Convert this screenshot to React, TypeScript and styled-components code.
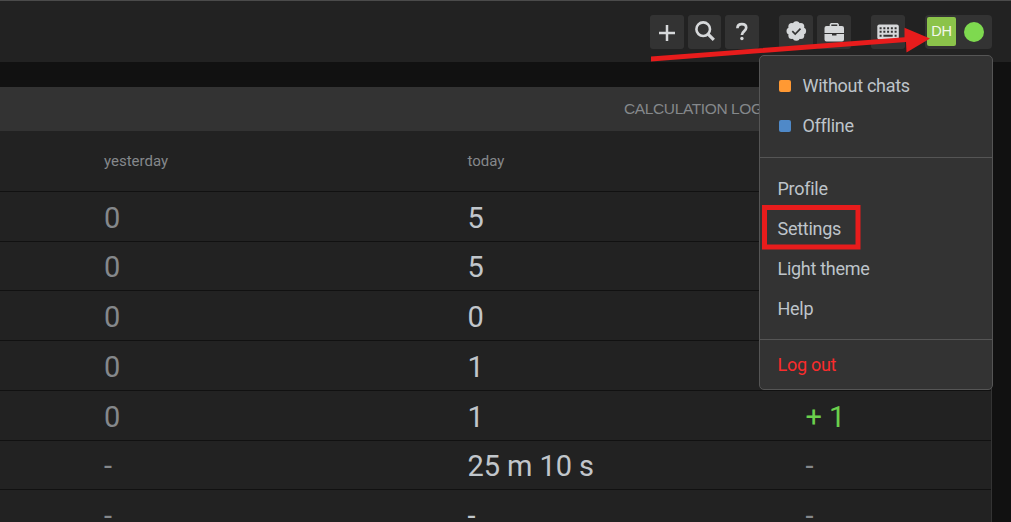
import React from "react";
import styled, { createGlobalStyle } from "styled-components";

const Global = createGlobalStyle`
  * { box-sizing: border-box; }
  html, body { margin: 0; height: 100%; overflow: hidden; }
  body { background: #111; font-family: Roboto, "Liberation Sans", sans-serif; color: #bec4ca; }
`;

const Page = styled.div`
  position: relative;
  height: 522px;
  overflow: hidden;
`;

const TopBar = styled.header`
  display: flex;
  justify-content: flex-end;
  align-items: flex-start;
  height: 62px;
  padding: 14px 19px 0 0;
  background: #222;
  border-top: 1px solid #4b4b4b;
`;

const ToolButton = styled.button<{ $gap?: number; $w?: number }>`
  width: ${(p) => p.$w ?? 34}px;
  height: 34px;
  margin: 0 ${(p) => p.$gap ?? 4}px 0 0;
  padding: 0;
  border: 0;
  border-radius: 3px;
  background: #333;
  color: #d6d8da;
  svg { display: block; }
`;

const UserButton = styled.button`
  display: flex;
  align-items: center;
  justify-content: space-between;
  width: 67px;
  height: 34px;
  padding: 0 8px 1px 2px;
  border: 0;
  border-radius: 4px;
  background: #333;
`;

const Avatar = styled.span`
  width: 29px;
  height: 29px;
  border-radius: 2px;
  background: #8bc34a;
  color: #f2f7ea;
  font: 14.5px/29px "Liberation Sans", Arial, sans-serif;
  letter-spacing: -0.3px;
  text-align: center;
`;

const StatusDot = styled.span`
  width: 20px;
  height: 20px;
  margin-top: 1px;
  border-radius: 50%;
  background: #7ed94f;
`;

const Panel = styled.main`
  width: 992px;
  margin-top: 25px;
  background: #222;
  border-right: 1px solid #333;
`;

const PanelHeader = styled.div`
  height: 44px;
  padding-left: 624px;
  background: #333;
  color: #85888b;
  font-family: "Liberation Sans", Arial, sans-serif;
  font-size: 15.5px;
  letter-spacing: -0.38px;
  line-height: 43px;
`;

const Row = styled.div<{ $head?: boolean }>`
  display: grid;
  grid-template-columns: 363.5px 338px 1fr;
  align-items: center;
  height: ${(p) => (p.$head ? "60px" : "49.72px")};
  padding-left: 104px;
  border-top: ${(p) => (p.$head ? "0" : "1px solid #111")};
  font-size: ${(p) => (p.$head ? 15 : 29)}px;
  letter-spacing: ${(p) => (p.$head ? 0 : -0.08)}px;
`;

const Cell = styled.span<{ $tone: "dim" | "bright" | "green"; $label?: boolean }>`
  padding-top: ${(p) => (p.$label ? 0 : 2.7)}px;
  color: ${(p) => ({ dim: "#85888b", bright: "#c1c6cb", green: "#6bd04d" })[p.$tone]};
`;

const Menu = styled.nav`
  position: absolute;
  left: 759px;
  top: 55px;
  width: 234px;
  height: 335px;
  border: 1px solid #555;
  border-radius: 5px;
  background: #333;
`;

const MenuGroup = styled.div<{ $pad: string }>`
  padding: ${(p) => p.$pad};
  & + & { border-top: 1px solid #555; }
`;

const MenuItem = styled.div<{ $danger?: boolean }>`
  display: flex;
  align-items: center;
  height: 40px;
  padding: 0 0 2px 17.5px;
  font-size: 18px;
  letter-spacing: -0.28px;
  color: ${(p) => (p.$danger ? "#fa2c2c" : "#bec4ca")};
`;

const Swatch = styled.i<{ $color: string }>`
  width: 12px;
  height: 12px;
  margin: 2px 11.5px 0 1.5px;
  border-radius: 2px;
  background: ${(p) => p.$color};
`;

const Annotation = styled.svg`
  position: absolute;
  inset: 0;
  pointer-events: none;
`;

const rows: [string, string, string][] = [
  ["0", "5", ""],
  ["0", "5", ""],
  ["0", "0", ""],
  ["0", "1", ""],
  ["0", "1", "+ 1"],
  ["-", "25 m 10 s", "-"],
  ["-", "-", "-"],
];

const Icon = ({ children }: { children: React.ReactNode }) => (
  <svg width="34" height="34" viewBox="0 0 34 34" fill="none" stroke="currentColor">
    {children}
  </svg>
);

const scallop = Array.from({ length: 8 }, (_, i) => {
  const a = (i * Math.PI) / 4 - Math.PI / 2;
  return [17.3 + 6.3 * Math.cos(a), 16 + 6.3 * Math.sin(a)];
});

export default function App() {
  return (
    <Page>
      <Global />
      <TopBar>
        <ToolButton aria-label="Add">
          <Icon><path d="M9 18h16M17 10v16" strokeWidth="2.5" /></Icon>
        </ToolButton>
        <ToolButton aria-label="Search" $w={33}>
          <Icon>
            <circle cx="15.2" cy="14.2" r="6.8" strokeWidth="2.6" />
            <path d="M19.8 18.8l6 6" strokeWidth="3.2" />
          </Icon>
        </ToolButton>
        <ToolButton aria-label="Help" $gap={20}>
          <Icon>
            <path d="M12.4 13.2c.1-2.7 1.8-4.1 4.5-4.1 2.6 0 4.3 1.3 4.3 3.7 0 3.4-4.3 3.3-4.3 7.3" strokeWidth="2.7" />
            <circle cx="16.9" cy="23.5" r="1.7" fill="currentColor" stroke="none" />
          </Icon>
        </ToolButton>
        <ToolButton aria-label="Verified">
          <Icon>
            <g fill="currentColor" stroke="none">
              <circle cx="17.3" cy="16" r="8" />
              {scallop.map(([x, y], i) => <circle key={i} cx={x} cy={y} r="3.5" />)}
            </g>
            <path d="M13.3 16.2l2.9 2.8 5.3-5.3" stroke="#333" strokeWidth="1.7" />
          </Icon>
        </ToolButton>
        <ToolButton aria-label="Briefcase" $gap={20}>
          <Icon>
            <path d="M13.5 12v-2.5l.8-.8h6l.8.8V12" strokeWidth="1.6" />
            <path d="M9.5 11h15.5a2 2 0 0 1 2 2V18H7.5v-5a2 2 0 0 1 2-2zM7.5 19.1h7.5v1.3h4.5v-1.3H27V24.5a2 2 0 0 1-2 2H9.5a2 2 0 0 1-2-2z" fill="currentColor" stroke="none" />
          </Icon>
        </ToolButton>
        <ToolButton aria-label="Keyboard" $gap={20}>
          <Icon>
            <rect x="6.3" y="9.5" width="21.5" height="15" rx="2" fill="currentColor" stroke="none" />
            <path d="M8.6 13.2h17M8.6 16.8h17" stroke="#333" strokeWidth="1.9" strokeDasharray="2 1.75" />
            <path d="M8.6 20.7h2M12.4 20.7h9.3M23.6 20.7h2" stroke="#333" strokeWidth="1.9" />
          </Icon>
        </ToolButton>
        <UserButton>
          <Avatar>DH</Avatar>
          <StatusDot />
        </UserButton>
      </TopBar>
      <Panel>
        <PanelHeader>CALCULATION LOGIC</PanelHeader>
        <Row $head>
          <Cell $label $tone="dim">yesterday</Cell>
          <Cell $label $tone="dim">today</Cell>
        </Row>
        {rows.map(([a, b, c], i) => (
          <Row key={i}>
            <Cell $tone="dim">{a}</Cell>
            <Cell $tone="bright">{b}</Cell>
            <Cell $tone={c === "-" ? "dim" : "green"}>{c}</Cell>
          </Row>
        ))}
      </Panel>
      <Menu>
        <MenuGroup $pad="10px 0 11px">
          <MenuItem><Swatch $color="#ff9933" />Without chats</MenuItem>
          <MenuItem><Swatch $color="#4f89c8" />Offline</MenuItem>
        </MenuGroup>
        <MenuGroup $pad="11px 0 10px">
          <MenuItem>Profile</MenuItem>
          <MenuItem>Settings</MenuItem>
          <MenuItem>Light theme</MenuItem>
          <MenuItem>Help</MenuItem>
        </MenuGroup>
        <MenuGroup $pad="5px 0 0">
          <MenuItem $danger>Log out</MenuItem>
        </MenuGroup>
      </Menu>
      <Annotation width="1011" height="522" viewBox="0 0 1011 522">
        <path d="M651 56.5L904.5 37.3L904.5 27.7L930 38.5L906.5 52.5L906 42L651 61.5z" fill="#e81c1c" />
        <rect x="764.5" y="207.5" width="93.5" height="39.5" fill="none" stroke="#e81c1c" strokeWidth="5" />
      </Annotation>
    </Page>
  );
}
